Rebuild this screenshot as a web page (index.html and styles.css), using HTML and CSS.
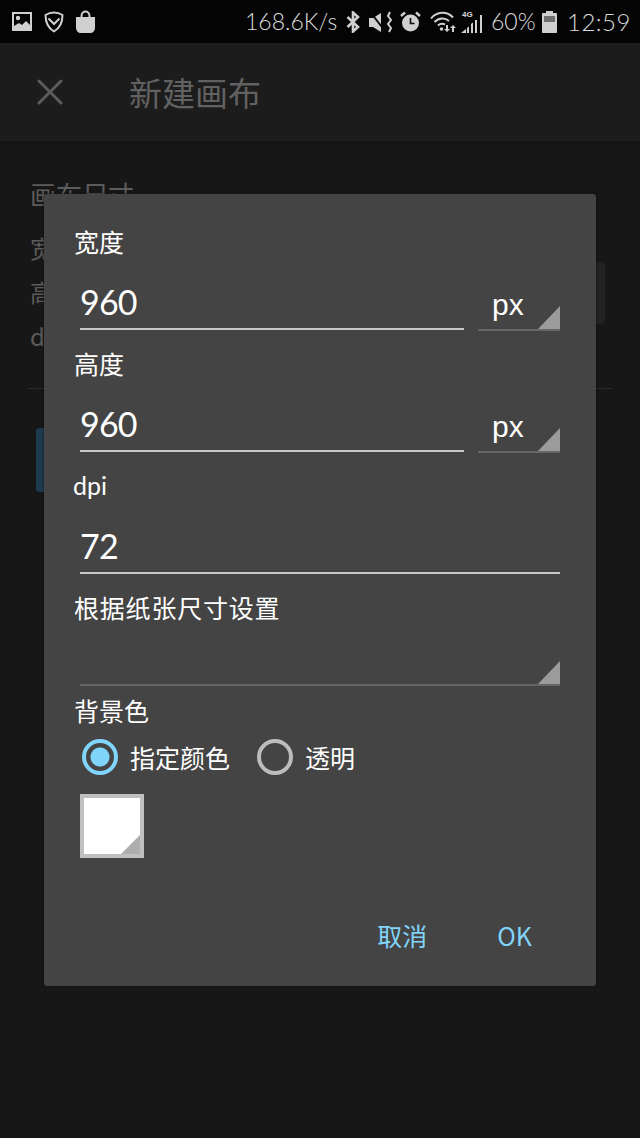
FILE: index.html
```html
<!DOCTYPE html>
<html>

<head>
    <title>新建画布</title>
    <link rel="stylesheet" href="styles.css">
</head>

<body>
    <div class="statusbar">
        <svg class="icon" width="22" height="21" viewBox="0 0 22 21">
            <path fill="#d0d0d0" fill-rule="evenodd" d="M1 1h20v19H1z M3 3v12l5-3 3 2 4-4 4 4V3z" />
            <circle cx="7" cy="7" r="2.2" fill="#d0d0d0" />
        </svg>
        <svg class="icon" width="20" height="22" viewBox="0 0 20 22">
            <path fill="none" stroke="#d0d0d0" stroke-width="2" stroke-linejoin="round"
                d="M10 1.500C13 1.500 16 2.500 18.500 4C18.500 11 16 17 10 20.500C4 17 1.500 11 1.500 4C4 2.500 7 1.500 10 1.500Z" />
            <path fill="none" stroke="#d0d0d0" stroke-width="2" d="M4.500 7.500L10 13L15.500 7.500" />
        </svg>
        <svg class="icon" width="21" height="23" viewBox="0 0 21 23">
            <path fill="#d0d0d0" d="M1 7h19v10c0 4-2 6-5 6H6c-3 0-5-2-5-6z" />
            <path fill="none" stroke="#d0d0d0" stroke-width="2" d="M6.500 8V6c0-6 8-6 8 0v2" />
        </svg>

        <span class="speed">168.6K/s</span>

        <svg class="icon" width="14" height="22" viewBox="0 0 14 22">
            <path fill="none" stroke="#d0d0d0" stroke-width="2.600" d="M1.500 6L12 16L7 20.500V1.500L12 6L1.500 16" />
        </svg>
        <svg class="icon" width="24" height="22" viewBox="0 0 24 22">
            <path fill="#d0d0d0" d="M0 7h4l8-5v19l-8-5H0z" />
            <path fill="none" stroke="#0a0a0a" stroke-width="2" d="M2 2l14 18" />
            <path fill="none" stroke="#d0d0d0" stroke-width="2" d="M21 1l-2 4 3 4-3 4 3 4-2 4" />
        </svg>
        <svg class="icon" width="21" height="22" viewBox="0 0 21 22">
            <circle cx="10.500" cy="12" r="8.500" fill="#d0d0d0" />
            <path fill="none" stroke="#0a0a0a" stroke-width="1.600" d="M10.500 7v5.500h4" />
            <path fill="none" stroke="#d0d0d0" stroke-width="2.400" d="M1 5l4-3.500M20 5l-4-3.500" />
        </svg>
        <svg class="icon" width="28" height="22" viewBox="0 0 28 22">
            <g fill="none" stroke="#d0d0d0" stroke-width="2">
                <path d="M1 7.500C7-0 17-0 23 6.500" />
                <path d="M4.500 11C9 6.500 15 6.500 19 10" />
                <path d="M8 14.500C10 12.500 13 12.500 15 13.500" />
            </g>
            <circle cx="11.500" cy="18" r="1.800" fill="#d0d0d0" />
            <path fill="#d0d0d0" d="M16 14h2v4h2l-3 3-3-3h2zM24 21h-2v-4h-2l3-3 3 3h-2z" />
        </svg>
        <span class="signal">
            <span class="signal-label">4G</span>
            <svg width="23" height="20" viewBox="0 0 23 20">
                <path fill="#d0d0d0" d="M0 20l5-4v4zM6 15l2-1.500V20H6zM10 11l2-1.500V20h-2zM14 7h2v13h-2zM19 2h2v18h-2z" />
            </svg>
        </span>
        <span class="battery-text">60%</span>
        <svg class="icon" width="15" height="22" viewBox="0 0 15 22">
            <path fill="#d0d0d0" d="M4 0h7v2h3c.600 0 1 .400 1 1v18c0 .600-.400 1-1 1H1c-.600 0-1-.400-1-1V3c0-.600.400-1 1-1h3z" />
            <path fill="#6e6e6e" d="M2 5h11v6H2z" />
        </svg>
        <span class="clock">12:59</span>
    </div>

    <div class="toolbar">
        <svg class="close" width="26" height="26" viewBox="0 0 26 26">
            <path fill="none" stroke="#5c5c5c" stroke-width="3" stroke-linecap="round" d="M2 2l22 22M24 2L2 24" />
        </svg>
        <span class="toolbar-title">新建画布</span>
    </div>

    <div class="backdrop">
        <div class="back-title">画布尺寸</div>
        <div class="back-rows">
            <div class="back-fields">
                <div>宽度</div>
                <div>高度</div>
                <div>dpi</div>
            </div>
            <div class="back-box"></div>
        </div>
        <div class="back-line"></div>
        <div class="back-button"></div>
    </div>

    <div class="dialog">
        <div class="label">宽度</div>
        <div class="field-row">
            <div class="input">960</div>
            <div class="select">
                <span>px</span>
                <div class="corner"></div>
            </div>
        </div>

        <div class="label">高度</div>
        <div class="field-row">
            <div class="input">960</div>
            <div class="select">
                <span>px</span>
                <div class="corner"></div>
            </div>
        </div>

        <div class="label label-dpi">dpi</div>
        <div class="field-row">
            <div class="input">72</div>
        </div>

        <div class="label label-paper">根据纸张尺寸设置</div>
        <div class="paper-select">
            <div class="corner"></div>
        </div>

        <div class="label label-bg">背景色</div>
        <div class="radios">
            <span class="radio radio-on"></span>
            <span class="radio-text">指定颜色</span>
            <span class="radio"></span>
            <span class="radio-text">透明</span>
        </div>

        <div class="swatch">
            <div class="swatch-fold"></div>
        </div>

        <div class="actions">
            <span class="action">取消</span>
            <span class="action">OK</span>
        </div>
    </div>
</body>

</html>
```

FILE: styles.css
```css
html,
body {
    margin: 0;
    height: 100%;
}

body {
    position: relative;
    height: 1138px;
    overflow: hidden;
    background: #171717;
    font-family: "Noto Sans CJK SC", "Noto Sans", sans-serif;
    color: #fff;
}

.statusbar {
    display: flex;
    align-items: center;
    height: 43px;
    padding-left: 11px;
    background: #040404;
    color: #dcdcdc;
}

.icon {
    display: block;
    flex: none;
    margin-right: 11px;
}

.speed,
.battery-text,
.clock {
    font-family: Lato, sans-serif;
    font-weight: 300;
    font-size: 23px;
    line-height: 43px;
}

.speed {
    flex: none;
    margin-left: 138px;
    width: 101px;
}

.speed + .icon {
    margin-right: 9px;
}

.speed + .icon + .icon {
    margin-right: 7px;
}

.speed + .icon + .icon + .icon {
    margin-right: 9px;
}

.speed + .icon + .icon + .icon + .icon {
    margin-right: 3px;
}

.signal {
    position: relative;
    display: block;
    flex: none;
    width: 23px;
    height: 22px;
    margin-right: 7px;
}

.signal svg {
    position: absolute;
    left: 0;
    bottom: 0;
}

.signal-label {
    position: absolute;
    top: -1px;
    left: 1px;
    font-family: "Liberation Sans", sans-serif;
    font-size: 8px;
    font-weight: bold;
}

.battery-text {
    flex: none;
    width: 51px;
}

.clock {
    margin-left: -1px;
    font-size: 24px;
    letter-spacing: 0.500px;
}

.toolbar {
    display: flex;
    align-items: center;
    height: 98px;
    border-bottom: 1px solid #141414;
    background: #1c1c1c;
    box-shadow: 0 1px 2px #121212;
}

.close {
    margin-left: 37px;
}

.toolbar-title {
    margin-left: 66px;
    font-size: 33px;
    line-height: 40px;
    color: #616161;
}

.backdrop {
    padding: 33px 0 0 30px;
    color: #5c5c5c;
}

.back-title {
    font-size: 26px;
    line-height: 38px;
}

.back-rows {
    display: flex;
}

.back-fields {
    padding-top: 13px;
    font-size: 24px;
    line-height: 44px;
}

.back-box {
    width: 200px;
    height: 62px;
    margin: 49px 35px 0 auto;
    border-radius: 4px;
    background: #222;
}

.back-line {
    height: 1px;
    margin: 30px 28px 0 -2px;
    background: #2b2b2b;
}

.back-button {
    width: 120px;
    height: 64px;
    margin: 39px 0 0 6px;
    border-radius: 4px;
    background: #1d3b4f;
}

.dialog {
    position: absolute;
    top: 194px;
    left: 44px;
    box-sizing: border-box;
    width: 552px;
    height: 792px;
    padding: 32px 36px 0 30px;
    border-radius: 3px;
    background: #444;
    box-shadow: 0 0 3px #111;
}

.label {
    height: 34px;
    font-size: 25px;
    line-height: 31px;
}

.label-dpi {
    font-family: Lato, sans-serif;
    margin-left: -1px;
}

.label-paper {
    letter-spacing: 0.800px;
}

.label-bg {
    margin-top: 9px;
}

.field-row {
    display: flex;
    justify-content: space-between;
    height: 70px;
    margin-bottom: 18px;
    padding-left: 6px;
}

.input {
    flex: 1;
    box-sizing: border-box;
    height: 70px;
    padding-top: 17px;
    border-bottom: 2px solid #c8c8c8;
    font-family: Lato, sans-serif;
    font-size: 34px;
    letter-spacing: -0.800px;
    line-height: 50px;
}

.select {
    position: relative;
    flex: none;
    box-sizing: border-box;
    width: 82px;
    height: 71px;
    margin-left: 14px;
    padding: 19px 0 0 14px;
    border-bottom: 2px solid #666;
    font-family: "Liberation Sans", sans-serif;
    font-size: 30px;
    line-height: 52px;
}

.corner {
    position: absolute;
    right: 0;
    bottom: 0;
    width: 0;
    height: 0;
    border-style: solid;
    border-width: 0 0 23px 22px;
    border-color: transparent transparent #9b9b9b transparent;
}

.paper-select {
    position: relative;
    height: 58px;
    margin-left: 6px;
    border-bottom: 2px solid #666;
}

.radios {
    display: flex;
    align-items: center;
    height: 44px;
    margin: 6px 0 0 8px;
}

.radio {
    flex: none;
    box-sizing: border-box;
    width: 36px;
    height: 36px;
    border: 4px solid #bdbdbd;
    border-radius: 50%;
}

.radio-on {
    border-color: #81d4fa;
    background: radial-gradient(circle, #81d4fa 0 9px, transparent 10px);
}

.radio-text {
    flex: none;
    margin: 0 27px 0 12px;
    font-size: 25px;
    line-height: 40px;
}

.swatch {
    position: relative;
    box-sizing: border-box;
    width: 64px;
    height: 64px;
    margin: 15px 0 0 6px;
    border: 4px solid #c0c0c0;
    background: #fff;
}

.swatch-fold {
    position: absolute;
    right: 0;
    bottom: 0;
    width: 0;
    height: 0;
    border-style: solid;
    border-width: 0 0 19px 19px;
    border-color: transparent transparent #aeaeae transparent;
}

.actions {
    display: flex;
    justify-content: flex-end;
    margin-top: 60px;
    padding-right: 28px;
}

.action {
    margin-left: 70px;
    font-size: 25px;
    line-height: 34px;
    color: #81d4fa;
}
```
